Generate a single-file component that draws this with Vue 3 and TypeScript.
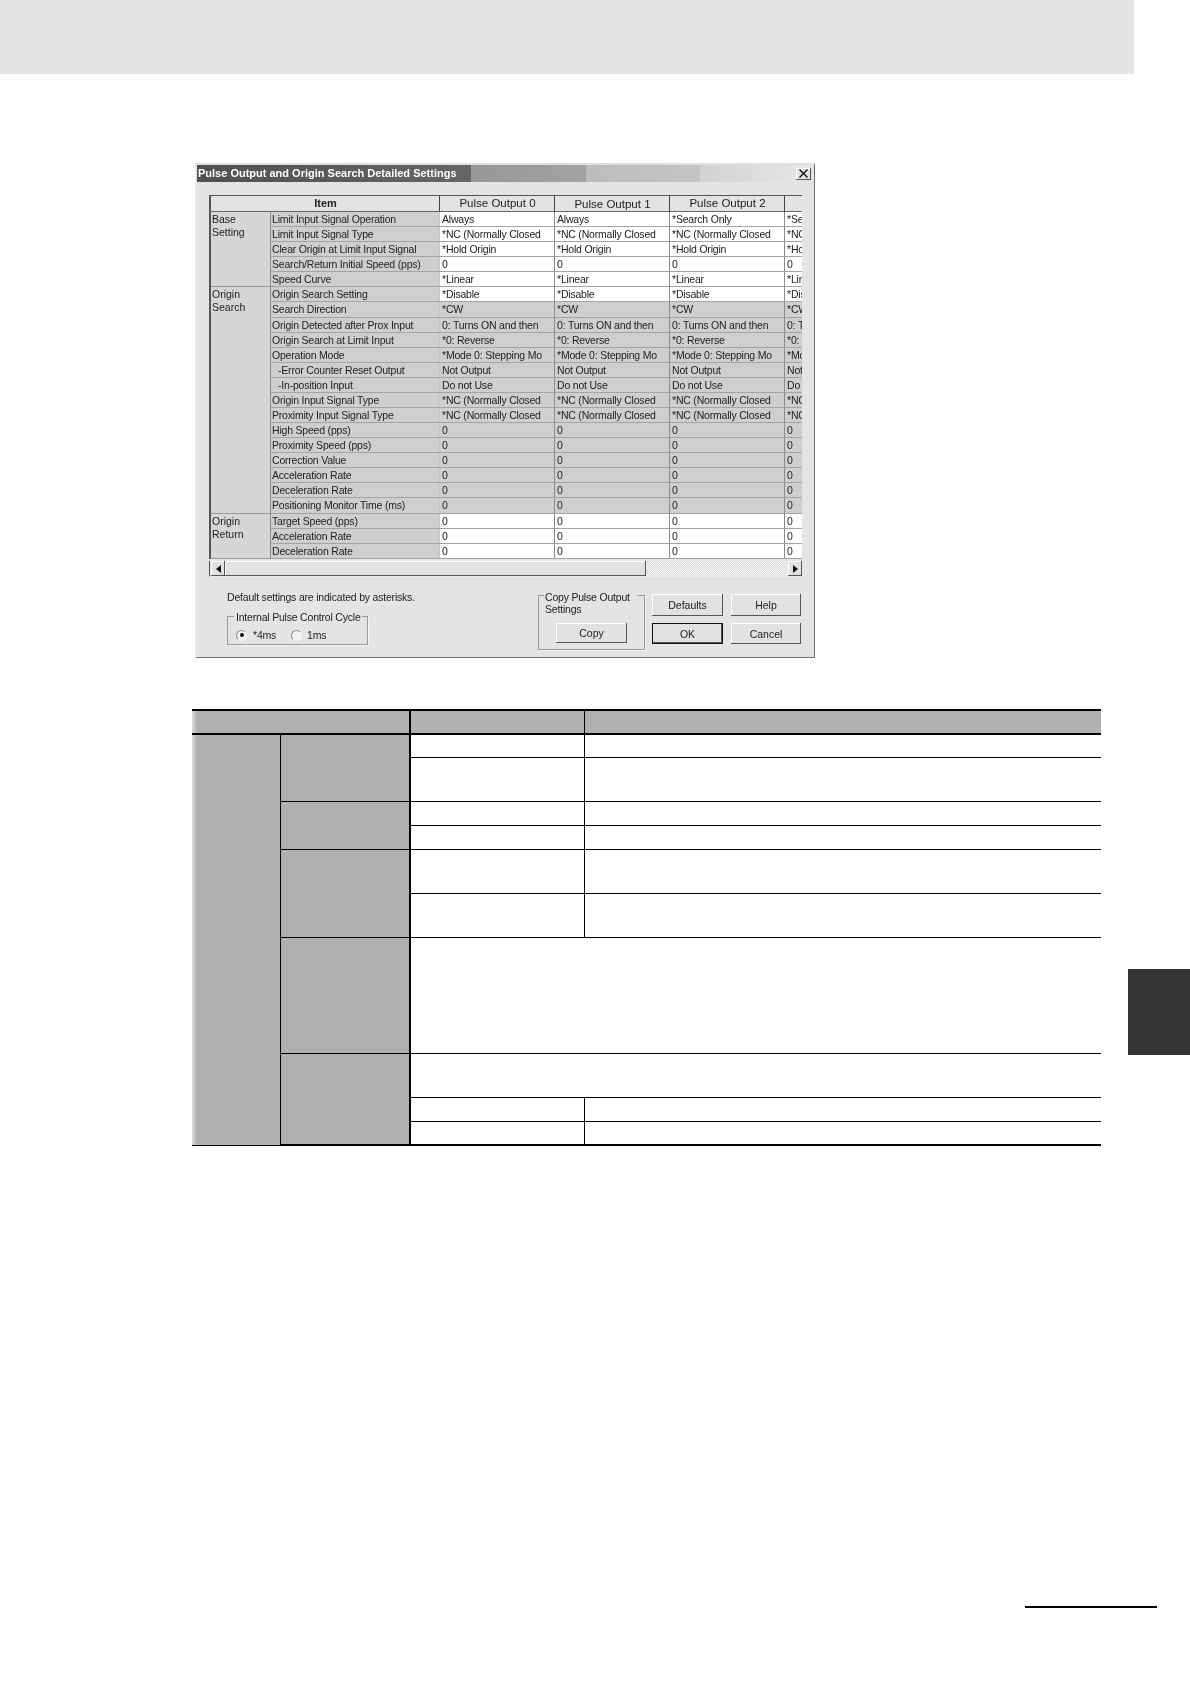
<script setup lang="ts">
interface Row { item: string; vals: string[]; tone: string; indent?: boolean }
interface Group { name: string[]; rows: Row[] }

const heads = ['Pulse Output 0', 'Pulse Output 1', 'Pulse Output 2', '']
const same = (a: string, b = a, c = b, d = c): string[] => [a, b, c, d]
const nc = '*NC (Normally Closed'
const turns = '0: Turns ON and then'
const mode = '*Mode 0: Stepping Mo'

const groups: Group[] = [
  {
    name: ['Base', 'Setting'],
    rows: [
      { item: 'Limit Input Signal Operation', vals: same('Always', 'Always', '*Search Only', '*Search Only'), tone: 'w' },
      { item: 'Limit Input Signal Type', vals: same(nc), tone: 'w' },
      { item: 'Clear Origin at Limit Input Signal', vals: same('*Hold Origin'), tone: 'w' },
      { item: 'Search/Return Initial Speed (pps)', vals: same('0'), tone: 'w' },
      { item: 'Speed Curve', vals: same('*Linear'), tone: 'w' },
    ],
  },
  {
    name: ['Origin', 'Search'],
    rows: [
      { item: 'Origin Search Setting', vals: same('*Disable'), tone: 'w' },
      { item: 'Search Direction', vals: same('*CW'), tone: 'g' },
      { item: 'Origin Detected after Prox Input', vals: same(turns), tone: 'g' },
      { item: 'Origin Search at Limit Input', vals: same('*0: Reverse'), tone: 'g' },
      { item: 'Operation Mode', vals: same(mode), tone: 'g' },
      { item: '-Error Counter Reset Output', vals: same('Not Output'), tone: 'g', indent: true },
      { item: '-In-position Input', vals: same('Do not Use'), tone: 'g', indent: true },
      { item: 'Origin Input Signal Type', vals: same(nc), tone: 'g' },
      { item: 'Proximity Input Signal Type', vals: same(nc), tone: 'g' },
      { item: 'High Speed (pps)', vals: same('0'), tone: 'g' },
      { item: 'Proximity Speed (pps)', vals: same('0'), tone: 'g' },
      { item: 'Correction Value', vals: same('0'), tone: 'g' },
      { item: 'Acceleration Rate', vals: same('0'), tone: 'g' },
      { item: 'Deceleration Rate', vals: same('0'), tone: 'g' },
      { item: 'Positioning Monitor Time (ms)', vals: same('0'), tone: 'g' },
    ],
  },
  {
    name: ['Origin', 'Return'],
    rows: [
      { item: 'Target Speed (pps)', vals: same('0'), tone: 'w' },
      { item: 'Acceleration Rate', vals: same('0'), tone: 'w' },
      { item: 'Deceleration Rate', vals: same('0'), tone: 'w' },
    ],
  },
]
</script>

<template>
  <div class="page">
    <div class="top-band"></div>

    <section class="dialog">
      <header class="title">
        <span class="title-text">Pulse Output and Origin Search Detailed Settings</span>
        <span class="close">
          <svg width="11" height="9" viewBox="0 0 11 9"><path d="M1.5 .5 9.5 8.5M9.5 .5 1.5 8.5" stroke="#111" stroke-width="1.4" fill="none" /></svg>
        </span>
      </header>

      <div class="sheet">
        <div class="grid">
          <div class="hd hd-item">Item</div>
          <div v-for="(h, i) in heads" :key="i" class="hd" :class="{ low: i === 1 }">{{ h }}</div>
          <template v-for="g in groups" :key="g.name.join()">
            <template v-for="(r, ri) in g.rows" :key="r.item">
              <div v-if="ri === 0" class="group" :style="{ gridRow: 'span ' + g.rows.length }">
                <div v-for="n in g.name" :key="n">{{ n }}</div>
              </div>
              <div class="item" :class="{ indent: r.indent }">{{ r.item }}</div>
              <div v-for="(v, vi) in r.vals" :key="vi" class="val" :class="r.tone">{{ v }}</div>
            </template>
          </template>
        </div>
        <div class="scroll">
          <span class="arrow-btn"><svg width="5" height="8" viewBox="0 0 5 8"><path d="M5 0V8L0 4Z" fill="#111" /></svg></span>
          <span class="thumb"></span>
          <span class="track"></span>
          <span class="arrow-btn"><svg width="5" height="8" viewBox="0 0 5 8"><path d="M0 0V8L5 4Z" fill="#111" /></svg></span>
        </div>
      </div>

      <div class="lower">
        <div class="lower-left">
          <p class="note">Default settings are indicated by asterisks.</p>
          <div class="cycle">
            <span class="legend">Internal Pulse Control Cycle</span>
            <span class="radio on"></span><span class="r-label first">*4ms</span>
            <span class="radio"></span><span class="r-label">1ms</span>
          </div>
        </div>
        <div class="copy">
          <span class="copy-label mask">Copy Pulse Output</span>
          <span class="copy-label">Settings</span>
          <button class="btn copy-btn" type="button">Copy</button>
        </div>
        <div class="actions">
          <button class="btn" type="button">Defaults</button>
          <button class="btn" type="button">Help</button>
          <button class="btn default" type="button">OK</button>
          <button class="btn" type="button">Cancel</button>
        </div>
      </div>
    </section>

    <div class="band">
      <div class="spec">
        <div class="c head h1"></div>
        <div class="c head h2"></div>
        <div class="c head h3"></div>

        <div class="c side"></div>
        <div class="c lab r12"></div>
        <div class="c col3 r1"></div><div class="c col4 r1"></div>
        <div class="c col3 r2"></div><div class="c col4 r2"></div>

        <div class="c lab r34"></div>
        <div class="c col3 r3"></div><div class="c col4 r3"></div>
        <div class="c col3 r4"></div><div class="c col4 r4"></div>

        <div class="c lab r56"></div>
        <div class="c col3 r5"></div><div class="c col4 r5"></div>
        <div class="c col3 r6"></div><div class="c col4 r6"></div>

        <div class="c lab r7"></div>
        <div class="c wide r7"></div>

        <div class="c lab r810 last"></div>
        <div class="c wide r8"></div>
        <div class="c col3 r9"></div><div class="c col4 r9"></div>
        <div class="c col3 r10 last"></div><div class="c col4 r10 last"></div>
      </div>
      <div class="tab"></div>
    </div>

    <div class="foot"></div>
  </div>
</template>

<style scoped>
.page {
  width: 1190px;
  height: 1684px;
  background: #fff;
  overflow: hidden;
  font-family: "Liberation Sans", Arial, sans-serif;
  color: #222;
}
.top-band {
  width: 1134px;
  height: 74px;
  background: #e5e5e5;
}

/* dialog */
.dialog {
  box-sizing: border-box;
  width: 620px;
  height: 495px;
  margin: 89px 0 0 195px;
  background: #e4e4e4;
  border-top: 2px solid #e0e0e0;
  border-left: 2px solid #e9e9e9;
  border-right: 1px solid #6e6e6e;
  border-bottom: 1px solid #6e6e6e;
  font-size: 10.5px;
  letter-spacing: -.2px;
  filter: blur(0.3px);
}
.title {
  display: flex;
  align-items: center;
  justify-content: space-between;
  height: 17px;
  padding: 0 3px 0 1px;
  background: linear-gradient(90deg, #505050 0, #666 274px, #989898 274px, #a2a2a2 389px, #bcbcbc 389px, #c4c4c4 503px, #d2d2d2 503px, #e4e4e4 600px);
}
.title-text {
  color: #fff;
  font-weight: 700;
  font-size: 11px;
  letter-spacing: 0;
  line-height: 17px;
  white-space: nowrap;
}
.close {
  display: flex;
  align-items: center;
  justify-content: center;
  width: 15px;
  height: 12px;
  background: #e2e2e2;
  box-shadow: inset -1px -1px #555, inset 1px 1px #fff;
}
.sheet {
  width: 593px;
  margin: 13px 0 0 12px;
}
.grid {
  display: grid;
  grid-template-columns: 60px 169px 115px 115px 115px 115px;
  grid-template-rows: 17px;
  grid-auto-rows: 15.09px;
  height: 364px;
  overflow: hidden;
  border-left: 2px solid #555;
  box-sizing: border-box;
  width: 593px;
  background: #d0d0d0;
  white-space: nowrap;
}
.hd {
  box-sizing: border-box;
  padding-left: 1px;
  border-top: 1px solid #555;
  border-bottom: 1px solid #666;
  border-right: 1px solid #444;
  background: #e3e3e3;
  font-size: 11.5px;
  letter-spacing: 0;
  line-height: 15px;
  text-align: center;
  overflow: hidden;
}
.hd.low { padding-top: 1px; }
.hd-item {
  grid-column: span 2;
  font-weight: 700;
  font-size: 11px;
}
.group {
  box-sizing: border-box;
  padding: 1px 0 0 1px;
  line-height: 13px;
  background: #d6d6d6;
  border-right: 1px solid #8c8c8c;
  border-bottom: 1px solid #999;
  font-size: 10.5px;
  letter-spacing: 0;
}
.item, .val {
  box-sizing: border-box;
  padding: 1px 0 0 2px;
  line-height: 13px;
  overflow: hidden;
  border-bottom: 1px solid #a4a4a4;
}
.item { background: #cfcfcf; border-right: 1px solid #c4c4c4; padding-left: 1px; }
.item.indent { padding-left: 7px; }
.val { border-right: 1px solid #8c8c8c; }
.val.w { background: #fff; }
.val.g { background: #cfcfcf; }

.scroll {
  display: flex;
  height: 15px;
  margin-top: 2px;
  padding-left: 1px;
  border-left: 1px solid #555;
  border-bottom: 1px solid #ededed;
  box-sizing: content-box;
}
.arrow-btn {
  display: flex;
  align-items: center;
  justify-content: center;
  width: 14px;
  background: #e2e2e2;
  box-shadow: inset -1px -1px #555, inset 1px 1px #fff;
}
.thumb {
  width: 421px;
  background: #e2e2e2;
  box-shadow: inset -1px -1px #555, inset 1px 1px #fff;
}
.track {
  flex: 1;
  background: repeating-conic-gradient(#f4f4f4 0 25%, #dcdcdc 0 50%) 0 0 / 2px 2px;
}

/* lower controls */
.lower {
  display: flex;
  align-items: flex-start;
  margin: 13px 0 0 30px;
}
.lower-left { width: 311px; }
.note {
  margin: 0;
  line-height: 14px;
}
.cycle {
  position: relative;
  box-sizing: border-box;
  display: flex;
  align-items: center;
  width: 141px;
  height: 29px;
  margin-top: 12px;
  padding: 9px 0 0 8px;
  border: 1px solid #9a9a9a;
  box-shadow: 1px 1px #f5f5f5;
}
.legend {
  position: absolute;
  left: 6px;
  top: -7px;
  padding: 0 1px 0 2px;
  line-height: 14px;
  background: #e4e4e4;
  white-space: nowrap;
}
.radio {
  box-sizing: border-box;
  position: relative;
  width: 11px;
  height: 11px;
  border-radius: 50%;
  background: #f2f2f2;
  border: 1px solid #888;
  border-right-color: #f5f5f5;
  border-bottom-color: #f5f5f5;
}
.radio.on::after {
  content: "";
  position: absolute;
  left: 2.5px;
  top: 2.5px;
  width: 4px;
  height: 4px;
  border-radius: 50%;
  background: #111;
}
.r-label { margin-left: 5px; }
.r-label.first { width: 38px; margin-left: 6px; }
.copy {
  position: relative;
  box-sizing: border-box;
  width: 107px;
  height: 55px;
  margin-top: 5px;
  padding: 0 0 0 5px;
  border: 1px solid #9a9a9a;
  box-shadow: 1px 1px #f5f5f5;
}
.copy-label {
  display: block;
  line-height: 13px;
  width: 94px;
  padding-left: 1px;
  box-sizing: border-box;
}
.copy-label.mask {
  margin-top: -5px;
  line-height: 12px;
  background: #e4e4e4;
}
.copy-btn {
  display: block;
  width: 71px;
  height: 20px;
  margin: 7px 0 0 12px;
}
.btn {
  box-sizing: border-box;
  padding: 0;
  border: 0;
  background: #e2e2e2;
  box-shadow: inset -1px -1px #555, inset 1px 1px #fff;
  font: 10.5px "Liberation Sans", Arial, sans-serif;
  color: #222;
}
.btn.default {
  border: 1px solid #111;
  box-shadow: inset -1px -1px #555;
}
.actions {
  display: grid;
  grid-template-columns: 71px 70px;
  grid-template-rows: 22px 21px;
  column-gap: 8px;
  row-gap: 7px;
  margin: 4px 0 0 7px;
}

/* spec table */
.band {
  display: flex;
  align-items: flex-start;
  margin-top: 51px;
  margin-left: 192px;
}
.spec {
  display: grid;
  width: 909px;
  grid-template-columns: 89px 130px 174px 516px;
  grid-template-rows: 26px 23px 44px 24px 24px 44px 44px 116px 44px 24px 24px;
  flex: none;
}
.c { box-sizing: border-box; background: #fff; }
.head {
  grid-row: 1;
  background: #b0b0b0;
  border-top: 2px solid #000;
  border-bottom: 2px solid #000;
}
.h1 {
  grid-column: 1 / 3;
  border-right: 2px solid #000;
  background: linear-gradient(90deg, #dcdcdc 0, #b0b0b0 5px);
}
.h2 { grid-column: 3; border-right: 1px solid #000; }
.h3 { grid-column: 4; }
.side {
  grid-column: 1;
  grid-row: 2 / 12;
  background: linear-gradient(90deg, #dcdcdc 0, #b0b0b0 5px);
  border-right: 1px solid #000;
  border-bottom: 1px solid #000;
}
.lab {
  grid-column: 2;
  background: #b0b0b0;
  border-right: 2px solid #000;
  border-bottom: 1px solid #000;
}
.r12 { grid-row: 2 / 4; }
.r34 { grid-row: 4 / 6; }
.r56 { grid-row: 6 / 8; }
.lab.r7 { grid-row: 8; }
.r810 { grid-row: 9 / 12; }
.col3 { grid-column: 3; border-right: 1px solid #000; border-bottom: 1px solid #000; }
.col4 { grid-column: 4; border-bottom: 1px solid #000; }
.wide { grid-column: 3 / 5; border-bottom: 1px solid #000; }
.r1 { grid-row: 2; }
.r2 { grid-row: 3; }
.r3 { grid-row: 4; }
.r4 { grid-row: 5; }
.r5 { grid-row: 6; }
.r6 { grid-row: 7; }
.wide.r7 { grid-row: 8; }
.r8 { grid-row: 9; }
.r9 { grid-row: 10; }
.r10 { grid-row: 11; }
.c.last { border-bottom-width: 2px; }
.tab {
  flex: none;
  width: 62px;
  height: 86px;
  margin: 260px 0 0 27px;
  background: #353535;
}
.foot {
  width: 132px;
  height: 2px;
  margin: 460px 0 0 1025px;
  background: #000;
}
</style>

<style>
body { background: #fff; }
</style>
